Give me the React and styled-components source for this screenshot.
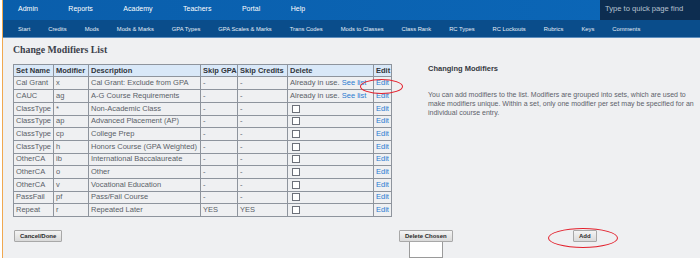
import React from "react";
import styled, { createGlobalStyle } from "styled-components";

const GlobalStyle = createGlobalStyle`
  html, body {
    margin: 0;
    padding: 0;
    background: #eff0f2;
  }
  body {
    font-family: "Liberation Sans", Arial, sans-serif;
  }
`;

const Frame = styled.div`
  position: relative;
  display: flex;
  width: 700px;
  height: 258px;
  overflow: hidden;
`;

const Gutter = styled.div`
  flex-shrink: 0;
  width: 2px;
  background: #ffffff;
  border-right: 1px solid #f0a850;
`;

const Main = styled.div`
  flex: 1;
  min-width: 0;
  display: flex;
  flex-direction: column;
  background: #eff0f2;
`;

const TopBar = styled.div`
  display: flex;
  height: 21px;
  background: linear-gradient(90deg, #0a5eab, #0b67b8);
`;

const TopNav = styled.div`
  flex: 1;
  min-width: 0;
  display: flex;
  gap: 30.5px;
  padding: 0 0 3px 15px;
  align-items: center;
  box-sizing: border-box;
`;

const TopItem = styled.span`
  color: #ffffff;
  font-size: 7px;
`;

const Search = styled.div`
  flex-shrink: 0;
  width: 100px;
  background: #0d2d50;
  color: #b7c3d1;
  font-size: 7.6px;
  display: flex;
  align-items: center;
  padding: 0 0 3px 5px;
  box-sizing: border-box;
  white-space: nowrap;
`;

const SubBar = styled.div`
  display: flex;
  gap: 18px;
  height: 19px;
  align-items: center;
  padding-left: 15px;
  background: #0a4d8b;
  border-bottom: 1px solid #5f8fbf;
`;

const SubItem = styled.span`
  color: #e6eef7;
  font-size: 5.8px;
  white-space: nowrap;
`;

const Content = styled.div`
  padding: 5px 0 0 10px;
`;

const Title = styled.h1`
  margin: 0 0 8px;
  font-family: "Liberation Serif", "DejaVu Serif", serif;
  font-weight: bold;
  font-size: 9.8px;
  line-height: 13px;
  color: #3b404a;
`;

const Body = styled.div`
  display: flex;
  align-items: flex-start;
`;

const Table = styled.table`
  flex-shrink: 0;
  border-collapse: collapse;
  width: 378px;
  table-layout: fixed;
  font-size: 7.5px;
  color: #5a5f68;
`;

const Th = styled.th`
  box-sizing: border-box;
  height: 12px;
  padding: 0 0 0 2px;
  text-align: left;
  font-weight: bold;
  color: #30343a;
  background: #d9e8f8;
  border: 1px solid #8e949d;
  white-space: nowrap;
  overflow: hidden;
`;

const Row = styled.tr`
  height: 12.7px;
`;

const Td = styled.td`
  padding: 0 0 0 2px;
  border: 1px solid #8e949d;
  white-space: nowrap;
  overflow: hidden;
  line-height: 10px;
`;

const Link = styled.span`
  color: #2b7bd1;
`;

const Check = styled.span`
  display: inline-block;
  width: 6px;
  height: 6px;
  margin-left: 2px;
  vertical-align: middle;
  background: #ffffff;
  border: 1px solid #6c7079;
`;

const Aside = styled.div`
  flex-shrink: 0;
  margin-left: 36px;
  width: 272px;
`;

const AsideTitle = styled.h2`
  margin: 0;
  font-size: 7.5px;
  line-height: 10px;
  font-weight: bold;
  color: #343840;
`;

const AsideText = styled.p`
  margin: 15.5px 0 0;
  font-size: 7px;
  line-height: 9.1px;
  color: #5c616a;
`;

const Actions = styled.div`
  display: grid;
  grid-template-columns: 386px 174px auto;
  align-items: start;
  margin-top: 13px;
`;

const Button = styled.button`
  height: 12px;
  padding: 0 5px;
  margin-left: ${(p) => p.$offset || 0}px;
  justify-self: start;
  font-family: "Liberation Sans", Arial, sans-serif;
  font-size: 6px;
  font-weight: bold;
  color: #2a2a2a;
  background: linear-gradient(#f4f4f4, #dadada);
  border: 1px solid #a8a8a8;
  border-radius: 1px;
  line-height: 10px;
`;

const DeleteGroup = styled.div`
  display: flex;
  flex-direction: column;
  align-items: center;
  justify-self: start;
`;

const Field = styled.div`
  width: 34px;
  height: 16px;
  background: #ffffff;
  border: 1px solid #9a9a9a;
  border-top: none;
  box-sizing: border-box;
`;

const Ring = styled.div`
  position: absolute;
  left: ${(p) => p.$x}px;
  top: ${(p) => p.$y}px;
  width: ${(p) => p.$w}px;
  height: ${(p) => p.$h}px;
  border: 1.3px solid #e3202c;
  border-radius: 50%;
  box-sizing: border-box;
`;

const topItems = ["Admin", "Reports", "Academy", "Teachers", "Portal", "Help"];

const subItems = [
  "Start",
  "Credits",
  "Mods",
  "Mods & Marks",
  "GPA Types",
  "GPA Scales & Marks",
  "Trans Codes",
  "Mods to Classes",
  "Class Rank",
  "RC Types",
  "RC Lockouts",
  "Rubrics",
  "Keys",
  "Comments",
];

const columns = [
  ["Set Name", 40],
  ["Modifier", 35],
  ["Description", 112],
  ["Skip GPA", 37],
  ["Skip Credits", 50],
  ["Delete", 86],
  ["Edit", 18],
];

const rows = [
  ["Cal Grant", "x", "Cal Grant: Exclude from GPA", "-", "-", true],
  ["CAUC", "ag", "A-G Course Requirements", "-", "-", true],
  ["ClassType", "*", "Non-Academic Class", "-", "-"],
  ["ClassType", "ap", "Advanced Placement (AP)", "-", "-"],
  ["ClassType", "cp", "College Prep", "-", "-"],
  ["ClassType", "h", "Honors Course (GPA Weighted)", "-", "-"],
  ["OtherCA", "ib", "International Baccalaureate", "-", "-"],
  ["OtherCA", "o", "Other", "-", "-"],
  ["OtherCA", "v", "Vocational Education", "-", "-"],
  ["PassFail", "pf", "Pass/Fail Course", "-", "-"],
  ["Repeat", "r", "Repeated Later", "YES", "YES"],
];

const App = () => (
  <>
    <GlobalStyle />
    <Frame>
      <Gutter />
      <Main>
        <TopBar>
          <TopNav>
            {topItems.map((item) => (
              <TopItem key={item}>{item}</TopItem>
            ))}
          </TopNav>
          <Search>Type to quick page find</Search>
        </TopBar>
        <SubBar>
          {subItems.map((item) => (
            <SubItem key={item}>{item}</SubItem>
          ))}
        </SubBar>
        <Content>
          <Title>Change Modifiers List</Title>
          <Body>
            <Table>
              <colgroup>
                {columns.map(([label, w]) => (
                  <col key={label} style={{ width: w }} />
                ))}
              </colgroup>
              <thead>
                <tr>
                  {columns.map(([label]) => (
                    <Th key={label}>{label}</Th>
                  ))}
                </tr>
              </thead>
              <tbody>
                {rows.map(([set, mod, desc, gpa, credits, inUse], i) => (
                  <Row key={i}>
                    <Td>{set}</Td>
                    <Td>{mod}</Td>
                    <Td>{desc}</Td>
                    <Td>{gpa}</Td>
                    <Td>{credits}</Td>
                    <Td>
                      {inUse ? (
                        <>
                          Already in use. <Link>See list</Link>
                        </>
                      ) : (
                        <Check />
                      )}
                    </Td>
                    <Td>
                      <Link>Edit</Link>
                    </Td>
                  </Row>
                ))}
              </tbody>
            </Table>
            <Aside>
              <AsideTitle>Changing Modifiers</AsideTitle>
              <AsideText>
                You can add modifiers to the list. Modifiers are grouped into
                sets, which are used to make modifiers unique. Within a set, only
                one modifier per set may be specified for an individual course
                entry.
              </AsideText>
            </Aside>
          </Body>
          <Actions>
            <Button $offset={1}>Cancel/Done</Button>
            <DeleteGroup>
              <Button>Delete Chosen</Button>
              <Field />
            </DeleteGroup>
            <Button>Add</Button>
          </Actions>
        </Content>
      </Main>
      <Ring $x={360} $y={79} $w={43} $h={15} />
      <Ring $x={548} $y={228} $w={70} $h={20} />
    </Frame>
  </>
);

export default App;
